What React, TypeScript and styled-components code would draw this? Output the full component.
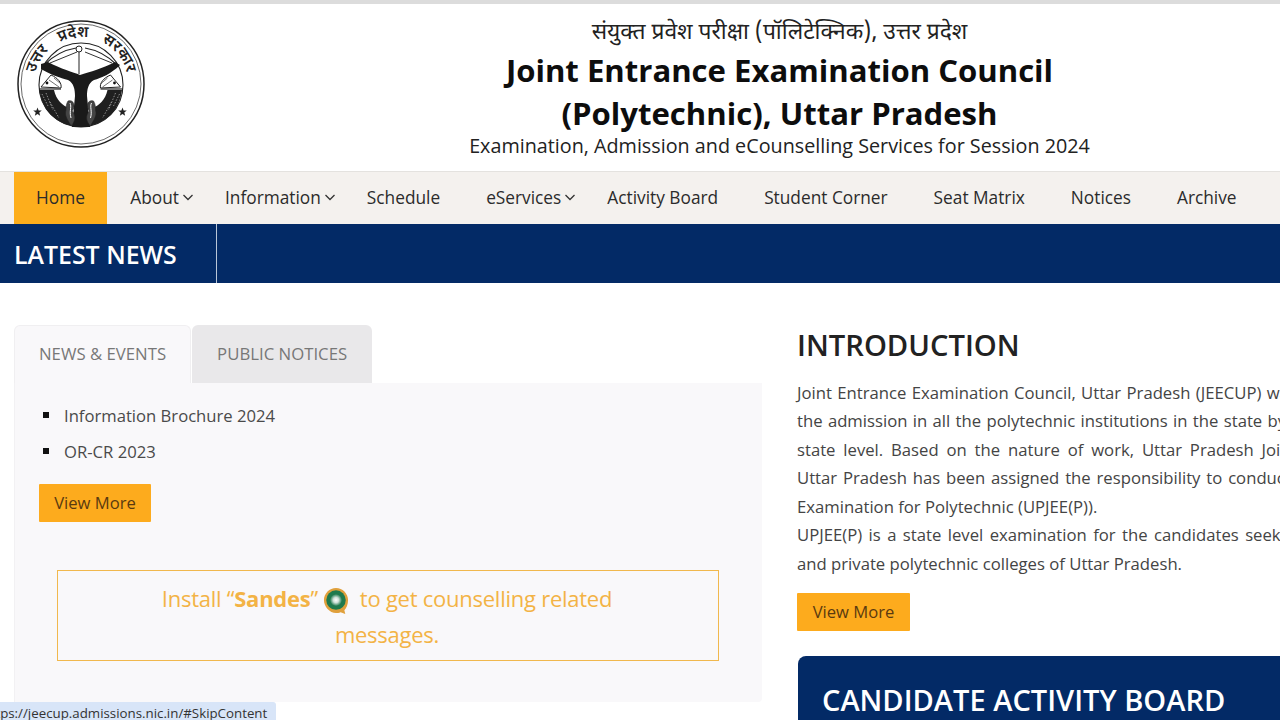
import React from 'react';
import styled, { createGlobalStyle } from 'styled-components';

const Global = createGlobalStyle`
  html, body { margin: 0; padding: 0; background: #fff; overflow: hidden; }
  body { font-family: "Open Sans", "Noto Sans", sans-serif; color: #333; }
  * { box-sizing: border-box; }
`;
const Page = styled.div`width: 1280px; height: 720px; overflow: hidden; position: relative; background: #fff;`;
const TopStrip = styled.div`height: 4px; background: #dcdcdc;`;
const Header = styled.header`height: 167px; display: flex; padding-left: 15px; align-items: flex-start; background: #fff;`;
const Logo = styled.svg`width: 132px; height: 132px; margin-top: 14px; flex: none;`;
const TitleBlock = styled.div`flex: 1; padding-left: 132px; text-align: center; padding-top: 15px; color: #111;`;
const Hindi = styled.div`font-family: "Noto Sans Devanagari", "Noto Sans", "Liberation Sans", sans-serif; font-size: 22.8px; line-height: 30px; color: #222;`;
const Title = styled.h1`margin: 0; font-size: 31.1px; line-height: 43px; font-weight: 700; color: #0d0d0d;`;
const Subtitle = styled.div`font-size: 19.75px; line-height: 21px; font-weight: 500; color: #222;`;
const Nav = styled.nav`height: 53px; background: #f4f1ee; border-top: 1px solid #e4e2df; display: flex; padding-left: 14px;`;
const NavItem = styled.a<{ $active?: boolean; $dropdown?: boolean }>`
  display: flex; align-items: center; gap: 3px; font-size: 17.3px; font-weight: 500; color: #2b2b2b;
  padding: 0 ${p => (p.$dropdown ? '8px' : p.$active ? '22.5px' : '23px')} 2px ${p => (p.$active ? '22px' : '23px')};
  background: ${p => (p.$active ? '#fdae1c' : 'transparent')};
`;
const Chevron = styled.svg`width: 12px; height: 7px; flex: none;`;
const NewsBar = styled.div`height: 59px; background: #032a66; display: flex;`;
const NewsLabel = styled.div`width: 217px; padding-left: 14px; border-right: 1px solid #b9c6d8; color: #fff; font-size: 24.9px; font-weight: 600; line-height: 60px;`;
const Columns = styled.main`display: flex; padding: 42px 0 0 14px;`;
const LeftColumn = styled.section`width: 748px; flex: none;`;
const Tabs = styled.div`display: flex; gap: 1px; height: 58px;`;
const Tab = styled.div<{ $active?: boolean }>`
  padding: 0 25px; font-size: 16.75px; line-height: 58px; color: #777;
  border-radius: 6px 6px 0 0;
  background: ${p => (p.$active ? '#f9f8fa' : '#e9e8ea')};
  ${p => (p.$active ? 'border: 1px solid #f0eff1; border-bottom: 0; padding: 0 24px; line-height: 56px;' : '')}
`;
const Panel = styled.div`height: 319px; background: #f9f8fa; border-left: 1px solid #f2f1f3; padding: 14px 25px 0 24px; border-radius: 0 0 4px 0;`;
const NewsList = styled.ul`margin: 0; padding: 0; list-style: none;`;
const NewsItem = styled.li`
  display: flex; align-items: center; height: 36px; font-size: 16.65px; color: #4a4a4a;
  &::before { content: ""; width: 6px; height: 6px; background: #111; margin: 0 15px 0 4px; flex: none; }
`;
const MoreButton = styled.a`
  display: flex; align-items: center; justify-content: center; width: 112px; height: 38px;
  background: #fdab1d; color: #5a3a10; font-size: 16.6px; border-radius: 1px; padding-bottom: 1px;
`;
const PanelMore = styled(MoreButton)`margin-top: 15px;`;
const Callout = styled.div`
  width: 662px; height: 91px; margin: 48px 0 0 18px; border: 1px solid #f1b84d;
  color: #f3b345; font-size: 22px; line-height: 36px; text-align: center; padding: 9px 2px 0 0;
  letter-spacing: -0.25px;
`;
const SandesIcon = styled.svg`width: 26px; height: 28px; vertical-align: -8px; margin: 0 5px 0 0;`;
const RightColumn = styled.section`width: 640px; flex: none; margin-left: 35px; padding-top: 2px;`;
const IntroHeading = styled.h2`margin: 0; font-size: 29.2px; line-height: 36px; font-weight: 600; color: #222;`;
const IntroBody = styled.div`margin-top: 15.6px;`;
const IntroLine = styled.div<{ $gap: number }>`
  font-size: 16.7px; line-height: 28.5px; color: #444; white-space: nowrap;
  word-spacing: ${p => p.$gap}px;
`;
const IntroMore = styled(MoreButton)`margin-top: 14.6px; width: 113px;`;
const Board = styled.div`margin: 25px 0 0 1px; height: 120px; background: #032a66; border-radius: 8px 0 0 0; padding: 25px 24px; color: #fff; font-size: 29.05px; line-height: 38px; font-weight: 600; white-space: nowrap;`;
const StatusTip = styled.div`
  position: absolute; left: 0; bottom: 0; width: 276px; height: 18px; background: #d8e5f8; overflow: hidden;
  border-radius: 0 3px 0 0; color: #333; font-size: 13.3px; line-height: 22px; white-space: nowrap;
`;
const StatusText = styled.span`display: block; margin-left: -17.5px;`;

const Down = () => (
  <Chevron viewBox="0 0 12 7"><path d="M1.5 1 L6 5.5 L10.5 1" fill="none" stroke="#333" strokeWidth="1.3" /></Chevron>
);

const star = (cx: number, cy: number, r: number) =>
  Array.from({ length: 10 }, (_, i) => {
    const a = -Math.PI / 2 + (i * Math.PI) / 5;
    const rad = i % 2 ? r * 0.42 : r;
    return `${(cx + rad * Math.cos(a)).toFixed(2)},${(cy + rad * Math.sin(a)).toFixed(2)}`;
  }).join(' ');

const FishSide = () => (
  <g>
    <path d="M26 69 L36 57 C43 60 47 65 46 70 Z" fill="#fff" stroke="#222" strokeWidth="1" />
    <path d="M34 62 L44 69 M39 60 L46 66" stroke="#333" strokeWidth="0.7" />
    <circle cx="32" cy="65" r="1.400" fill="#111" />
    <path d="M24 71 H46" stroke="#222" strokeWidth="1.2" />
    <path d="M24.500 72 L39 72 C41 82 48 88 54 90 L58 108 C40 105 27 92 24.500 72 Z" fill="#1f1f1f" />
    <path d="M27 76 L33 88 M31 75 L38 92 M35 84 L44 100" stroke="#aaa" strokeWidth="0.8" strokeDasharray="1.5 1.500" />
    <path d="M53 83 C59 81 61 89 57 93 C61 97 61 103 56 108 C53 102 49 98 51 92 C51 90 51 86 53 83 Z" fill="#444" stroke="#222" strokeWidth="0.6" />
    <path d="M55 85 C57 89 54 93 56 100" fill="none" stroke="#fff" strokeWidth="1" />
  </g>
);

const Emblem = () => (
  <Logo viewBox="0 0 132 132">
    <defs>
      <path id="arcText" d="M19 66 A47 47 0 0 1 113 66" />
    </defs>
    <circle cx="66" cy="66" r="63" fill="#fff" stroke="#222" strokeWidth="1.5" />
    <circle cx="66" cy="66" r="60" fill="none" stroke="#444" strokeWidth="0.8" />
    <circle cx="66" cy="67" r="42" fill="none" stroke="#222" strokeWidth="1.1" />
    <text fontFamily="'Noto Sans Devanagari','Noto Sans',sans-serif" fontSize="15.5" fontWeight="600" fill="#222" wordSpacing="10">
      <textPath href="#arcText" startOffset="50%" textAnchor="middle">उत्तर प्रदेश सरकार</textPath>
    </text>
    <path d="M29 47 Q43 33 61 30 M70 30 Q88 33 102 47" fill="none" stroke="#222" strokeWidth="1.2" />
    <path d="M35 45 L62 34 M70 34 L97 45" fill="none" stroke="#333" strokeWidth="1" />
    <path d="M64 33 V56" stroke="#222" strokeWidth="1" />
    <circle cx="64" cy="31" r="3" fill="#fff" stroke="#222" strokeWidth="1" />
    <path d="M26 46 L33 44 C46 51 58 54 65 57 C75 54 88 50 100 44 L105 47 C96 56 86 60 79 62 C73 65 72 72 72 78 L75 109 H57 L60 78 C60 72 59 65 53 62 C46 60 34 56 26 51 Z" fill="#1a1a1a" />
    <FishSide />
    <g transform="translate(131.500 0) scale(-1 1)"><FishSide /></g>
    <polygon points={star(22.500, 94, 4.500)} fill="#222" />
    <polygon points={star(107.500, 94, 4.500)} fill="#222" />
  </Logo>
);

const Sandes = () => (
  <SandesIcon viewBox="0 0 28 30">
    <defs>
      <radialGradient id="sandesCore"><stop offset="0" stopColor="#fff" /><stop offset="0.45" stopColor="#cfe0d8" /><stop offset="1" stopColor="#1f7a4d" /></radialGradient>
    </defs>
    <path d="M14 1 C21 1 27 7 27 14 C27 19 25 23 23 25 L24 29 L19 27 C17 28 15.500 28 14 28 C7 28 1 21 1 14 C1 7 7 1 14 1 Z" fill="#e0a03c" />
    <circle cx="14" cy="14" r="10.500" fill="#1f7a4d" />
    <circle cx="14" cy="14" r="6.500" fill="url(#sandesCore)" />
  </SandesIcon>
);

const navItems = [
  { label: 'Home', active: true },
  { label: 'About', dropdown: true },
  { label: 'Information', dropdown: true },
  { label: 'Schedule' },
  { label: 'eServices', dropdown: true },
  { label: 'Activity Board' },
  { label: 'Student Corner' },
  { label: 'Seat Matrix' },
  { label: 'Notices' },
  { label: 'Archive' },
];

const introLines = [
  { text: 'Joint Entrance Examination Council, Uttar Pradesh (JEECUP) was constituted for', gap: 1 },
  { text: 'the admission in all the polytechnic institutions in the state by conducting', gap: 1 },
  { text: 'state level. Based on the nature of work, Uttar Pradesh Joint Entrance', gap: 3.5 },
  { text: 'Uttar Pradesh has been assigned the responsibility to conduct the Joint Entrance', gap: 1.5 },
  { text: 'Examination for Polytechnic (UPJEE(P)).', gap: 0 },
  { text: 'UPJEE(P) is a state level examination for the candidates seeking admission', gap: 2.1 },
  { text: 'and private polytechnic colleges of Uttar Pradesh.', gap: 0 },
];

export default function App() {
  return (
    <Page>
      <Global />
      <TopStrip />
      <Header>
        <Emblem />
        <TitleBlock>
          <Hindi>संयुक्त प्रवेश परीक्षा (पॉलिटेक्निक), उत्तर प्रदेश</Hindi>
          <Title>Joint Entrance Examination Council<br />(Polytechnic), Uttar Pradesh</Title>
          <Subtitle>Examination, Admission and eCounselling Services for Session 2024</Subtitle>
        </TitleBlock>
      </Header>
      <Nav>
        {navItems.map(n => (
          <NavItem key={n.label} $active={n.active} $dropdown={n.dropdown}>
            {n.label}{n.dropdown && <Down />}
          </NavItem>
        ))}
      </Nav>
      <NewsBar><NewsLabel>LATEST NEWS</NewsLabel></NewsBar>
      <Columns>
        <LeftColumn>
          <Tabs>
            <Tab $active>NEWS &amp; EVENTS</Tab>
            <Tab>PUBLIC NOTICES</Tab>
          </Tabs>
          <Panel>
            <NewsList>
              <NewsItem>Information Brochure 2024</NewsItem>
              <NewsItem>OR-CR 2023</NewsItem>
            </NewsList>
            <PanelMore>View More</PanelMore>
            <Callout>
              Install “<b>Sandes</b>” <Sandes /> to get counselling related<br />messages.
            </Callout>
          </Panel>
        </LeftColumn>
        <RightColumn>
          <IntroHeading>INTRODUCTION</IntroHeading>
          <IntroBody>
            {introLines.map(l => (
              <IntroLine key={l.text} $gap={l.gap}>{l.text}</IntroLine>
            ))}
          </IntroBody>
          <IntroMore>View More</IntroMore>
          <Board>CANDIDATE ACTIVITY BOARD</Board>
        </RightColumn>
      </Columns>
      <StatusTip><StatusText>https://jeecup.admissions.nic.in/#SkipContent</StatusText></StatusTip>
    </Page>
  );
}
